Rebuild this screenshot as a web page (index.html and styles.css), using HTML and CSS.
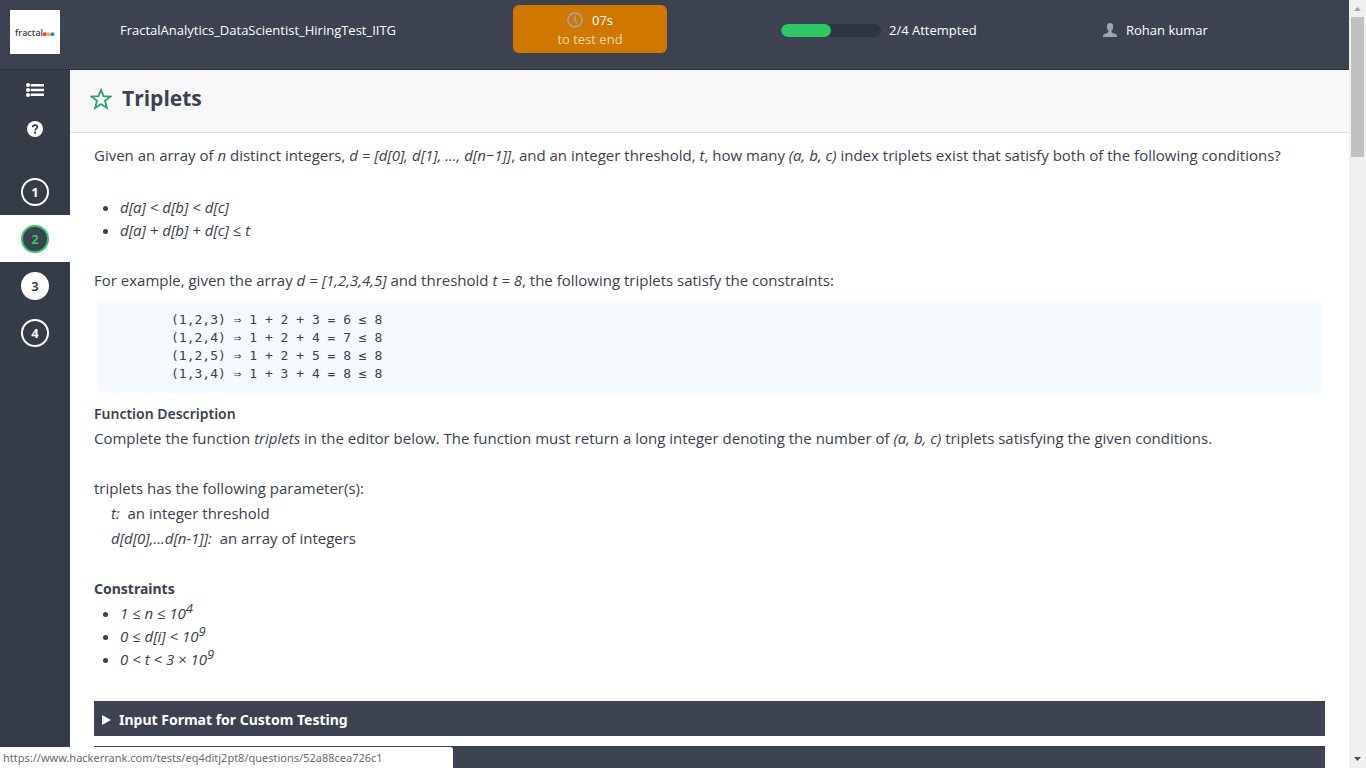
FILE: index.html
```html
<!DOCTYPE html>
<html lang="en">
<head>
<meta charset="utf-8">
<title>Triplets</title>
<link rel="stylesheet" href="styles.css">
</head>
<body>
<div class="app">
  <header class="topbar">
    <div class="brand">
      <svg class="logo" viewBox="0 0 50 44" role="img" aria-label="fractal">
        <rect width="50" height="44" fill="#fff"/>
        <text class="logo-text" x="5" y="26">fractal</text>
        <circle cx="34.8" cy="24.3" r="2" fill="#e8402f"/>
        <circle cx="38.6" cy="24.3" r="2" fill="#f9b233"/>
        <circle cx="42.4" cy="24.3" r="2" fill="#1d8fd6"/>
      </svg>
      <span class="test-name">FractalAnalytics_DataScientist_HiringTest_IITG</span>
    </div>
    <div class="timer">
      <div class="timer-left">
        <svg width="16" height="16" viewBox="0 0 16 16" fill="none" stroke="#a9a097" stroke-width="1.8"><circle cx="8" cy="8" r="7"/><path d="M7.8 3.8V8.4L10 11"/></svg>
        <span>07s</span>
      </div>
      <div class="timer-note">to test end</div>
    </div>
    <div class="attempts">
      <div class="bar"><div class="bar-fill" style="width:50%"></div></div>
      <span>2/4 Attempted</span>
    </div>
    <div class="user">
      <svg width="14" height="14" viewBox="0 0 14 14" fill="#9ca3b4"><path d="M7 0C9 0 10.2 1.3 10.2 3.4C10.2 5.3 9.6 6.8 8.6 7.8C8.4 8.9 8.7 9.6 9.7 10L12.4 11C13.5 11.4 14 12 14 13V14H0V13C0 12 .5 11.4 1.6 11L4.3 10C5.3 9.6 5.6 8.9 5.4 7.8C4.4 6.8 3.8 5.3 3.8 3.4C3.8 1.3 5 0 7 0Z"/></svg>
      <span>Rohan kumar</span>
    </div>
  </header>

  <nav class="sidebar" aria-label="Questions">
    <button class="tool" type="button" aria-label="All questions">
      <svg width="18" height="14" viewBox="0 0 18 14" fill="#fff"><circle cx="2" cy="2" r="2"/><circle cx="2" cy="7" r="2"/><circle cx="2" cy="12" r="2"/><path d="M4.6 1H18V3.5H4.6ZM4.6 5.8H18V8.3H4.6ZM4.6 10.6H18V13H4.6Z"/></svg>
    </button>
    <button class="tool" type="button" aria-label="Help">
      <svg width="16" height="16" viewBox="0 0 16 16"><circle cx="8" cy="8" r="8" fill="#fff"/><path d="M5.8 6.3C5.8 4.8 6.7 4.1 8 4.1S10.3 4.9 10.3 6.1C10.3 7.7 8.1 7.7 8.1 9.6" fill="none" stroke="#353c48" stroke-width="1.7"/><rect x="7.1" y="10.7" width="1.9" height="1.9" fill="#353c48"/></svg>
    </button>
    <ol class="questions">
      <li><a href="#q1"><span class="num">1</span></a></li>
      <li><a href="#q2" class="current" aria-current="page"><span class="num">2</span></a></li>
      <li><a href="#q3" class="done"><span class="num">3</span></a></li>
      <li><a href="#q4"><span class="num">4</span></a></li>
    </ol>
  </nav>

  <main class="main">
    <div class="title-bar">
      <button class="star" type="button" aria-label="Bookmark question">
        <svg width="22" height="22" viewBox="0 0 22 22" fill="none" stroke="#2ba562" stroke-width="1.8"><path d="M11 2L13.5 8.2L20.3 8.6L15 12.8L16.9 20L11 16.1L5.1 20L7 12.8L1.7 8.6L8.5 8.2Z"/></svg>
      </button>
      <h1>Triplets</h1>
    </div>
    <div class="content">
      <p>Given an array of <em>n</em> distinct integers, <em>d = [d[0], d[1], ..., d[n−1]]</em>, and an integer threshold, <em>t</em>, how many <em>(a, b, c)</em> index triplets exist that satisfy both of the following conditions?</p>
      <ul class="spaced">
        <li><em>d[a] &lt; d[b] &lt; d[c]</em></li>
        <li><em>d[a] + d[b] + d[c] ≤ t</em></li>
      </ul>
      <p>For example, given the array <em>d = [1,2,3,4,5]</em> and threshold <em>t = 8</em>, the following triplets satisfy the constraints:</p>
<pre>(1,2,3) ⇒ 1 + 2 + 3 = 6 ≤ 8
(1,2,4) ⇒ 1 + 2 + 4 = 7 ≤ 8
(1,2,5) ⇒ 1 + 2 + 5 = 8 ≤ 8
(1,3,4) ⇒ 1 + 3 + 4 = 8 ≤ 8</pre>
      <h2 class="semi">Function Description</h2>
      <p>Complete the function <em>triplets</em> in the editor below. The function must return a long integer denoting the number of <em>(a, b, c)</em> triplets satisfying the given conditions.</p>
      <div class="params">
        <p>triplets has the following parameter(s):</p>
        <p class="param"><em>t:</em>&nbsp; an integer threshold</p>
        <p class="param"><em>d[d[0],...d[n-1]]:</em>&nbsp; an array of integers</p>
      </div>
      <h2>Constraints</h2>
      <ul class="limits">
        <li><em>1 ≤ n ≤ 10<sup>4</sup></em></li>
        <li><em>0 ≤ d[i] &lt; 10<sup>9</sup></em></li>
        <li><em>0 &lt; t &lt; 3 × 10<sup>9</sup></em></li>
      </ul>
      <div class="panels">
        <details><summary><svg width="9" height="10" viewBox="0 0 9 10" fill="#fff"><path d="M0 0L9 5L0 10Z"/></svg>Input Format for Custom Testing</summary></details>
        <details><summary></summary></details>
      </div>
    </div>
  </main>

  <div class="scrollbar" aria-hidden="true">
    <svg width="17" height="17" viewBox="0 0 17 17"><path d="M5 11L8.5 7L12 11Z" fill="#a3a3a3"/></svg>
    <div class="thumb"></div>
    <svg class="down" width="17" height="17" viewBox="0 0 17 17"><path d="M5 6H12L8.5 10Z" fill="#505050"/></svg>
  </div>
</div>
<div class="status">https://www.hackerrank.com/tests/eq4ditj2pt8/questions/52a88cea726c1</div>
</body>
</html>
```
FILE: styles.css
```css
* { box-sizing: border-box; }
body, h1, h2, p, ul, ol, pre { margin: 0; padding: 0; }
body {
  font-family: "Noto Sans", "Open Sans", sans-serif;
  font-size: 14px;
  color: #39424e;
  background: #fff;
}
button { border: 0; padding: 0; background: none; cursor: pointer; display: flex; }
.app {
  display: grid;
  grid-template: auto 1fr / 70px 1fr 17px;
  height: 100vh;
  overflow: hidden;
}

/* top bar */
.topbar {
  grid-column: 1 / 3;
  display: grid;
  grid-template-columns: 513fr 268fr 322fr 246fr;
  align-items: start;
  height: 70px;
  background: #3c424f;
  border-bottom: 1px solid #2d333e;
  color: #fff;
  font-family: "Open Sans", sans-serif;
  font-size: 13px;
  line-height: 20px;
}
.brand { display: flex; align-items: flex-start; padding: 10px 0 0 10px; }
.logo { width: 50px; height: 44px; margin-right: 60px; }
.logo-text { font: 600 9px "Open Sans", sans-serif; fill: #45434c; }
.test-name { padding-top: 10px; }
.timer {
  width: 154px;
  height: 48px;
  margin-top: 5px;
  padding-top: 5px;
  border-radius: 6px;
  background: #d07700;
  text-align: center;
}
.timer-left { display: flex; justify-content: center; align-items: center; gap: 9px; }
.timer-note { color: #ecd6b8; line-height: 18px; }
.attempts { display: flex; align-items: center; gap: 8px; padding-top: 20px; }
.bar { width: 100px; height: 13px; border-radius: 7px; background: #2d3542; overflow: hidden; }
.bar-fill { height: 100%; border-radius: 7px; background: #2ec866; }
.user { display: flex; align-items: center; gap: 9px; padding-top: 20px; }

/* question navigation */
.sidebar { background: #353c48; display: flex; flex-direction: column; align-items: center; }
.tool { height: 39px; align-items: center; }
.questions { list-style: none; width: 100%; padding-top: 20px; }
.questions a {
  display: flex;
  align-items: center;
  justify-content: center;
  height: 47px;
  color: #fff;
  text-decoration: none;
}
.num {
  width: 28px;
  height: 28px;
  border: 2px solid #fff;
  border-radius: 50%;
  font-size: 13px;
  font-weight: 700;
  line-height: 24px;
  text-align: center;
}
.questions .current { background: #fff; }
.current .num { background: #3c424f; border-color: #2ec866; color: #2ec866; }
.done .num { background: #fff; color: #2d333e; font-weight: 600; }

/* question */
.main { min-width: 0; overflow: hidden; }
.title-bar {
  display: flex;
  align-items: center;
  gap: 10px;
  height: 63px;
  padding: 0 20px 4px;
  background: #f8f8f8;
  border-bottom: 1px solid #dedede;
}
h1 { padding-bottom: 2px; font: 700 21px/30px "Open Sans", sans-serif; }
.content { padding: 10px 24px 0; line-height: 25px; }
.content p, .content ul { font-family: "Open Sans", sans-serif; font-size: 15px; }
h2 { font-size: 14px; font-weight: 700; line-height: 25px; }
.semi { font-weight: 600; }
.content ul { padding-left: 26px; line-height: 23px; }
.spaced { margin: 28px 0 26px; }
.limits { padding-top: 1px; }
sup { line-height: 0; font-size: 13px; }
pre {
  margin: 8px 4px;
  padding: 10px 73px;
  background: #f4faff;
  font: 13px/18px "DejaVu Sans Mono", monospace;
}
.params { margin: 25px 0; }
.param { padding-left: 17px; }
.panels { display: flex; flex-direction: column; gap: 10px; margin-top: 30px; }
summary {
  display: flex;
  align-items: center;
  gap: 8px;
  height: 35px;
  padding: 2px 8px 0;
  background: #3c424f;
  color: #fff;
  font-weight: 700;
  cursor: pointer;
}

/* window scroll track */
.scrollbar {
  grid-column: 3;
  grid-row: 1 / 3;
  display: flex;
  flex-direction: column;
  background: #f0f0f0;
}
.thumb { height: 140px; margin: 0 2px; background: #c1c1c1; }
.down { margin-top: auto; }

/* link target shown over the page */
.status {
  position: fixed;
  left: 0;
  bottom: 0;
  width: 453px;
  height: 21px;
  padding-left: 3px;
  border-radius: 0 3px 0 0;
  background: #fff;
  color: #6b6b6b;
  font-size: 11px;
  line-height: 21px;
}
```
